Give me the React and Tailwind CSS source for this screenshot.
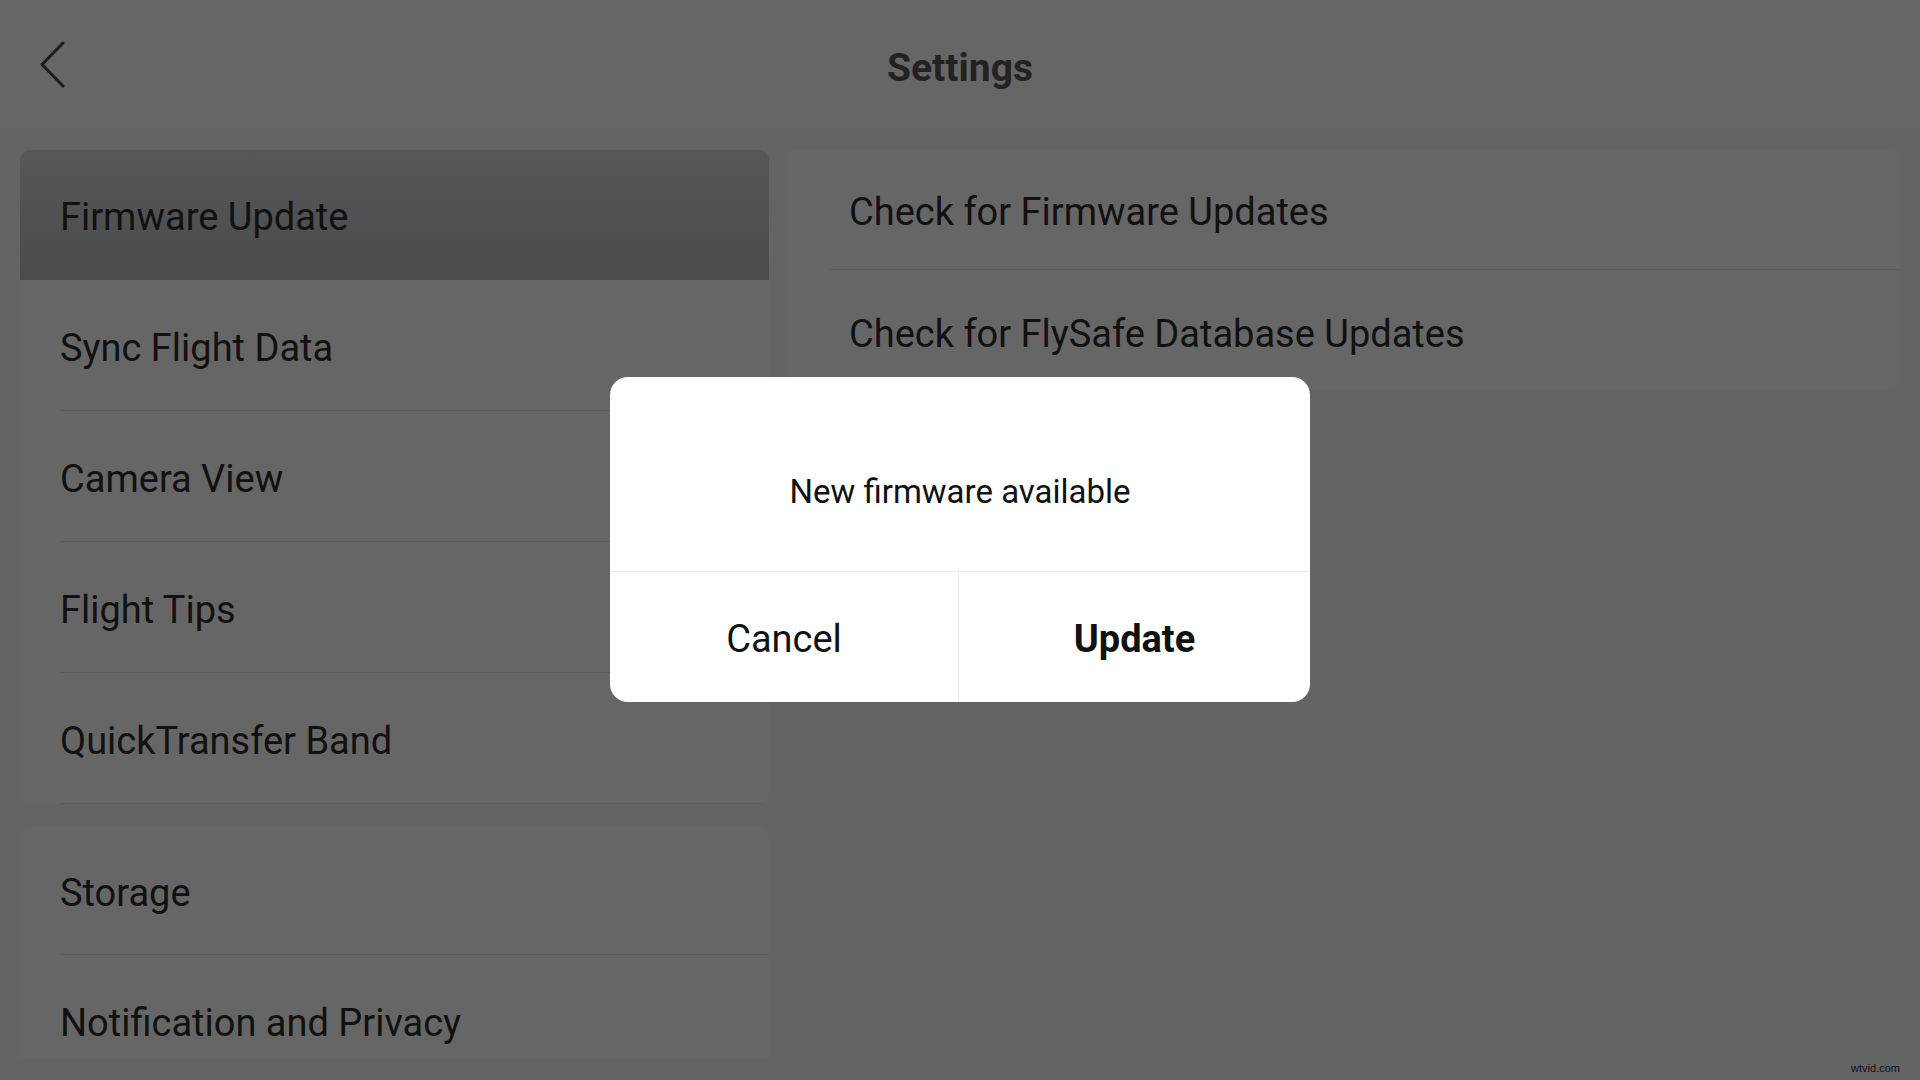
import React from "react";

const leftGroup1 = [
  "Firmware Update",
  "Sync Flight Data",
  "Camera View",
  "Flight Tips",
  "QuickTransfer Band",
];

export default function App() {
  return (
    <div
      className="relative w-[1920px] h-[1080px] overflow-hidden bg-[#636464] text-[#111]"
      style={{ fontFamily: "Roboto, 'Noto Sans', sans-serif" }}
    >
      {/* Header */}
      <div className="h-[128px] bg-[#666666] grid grid-cols-[1fr_auto_1fr] items-center">
        <div className="pl-[38px] flex items-center">
          <svg width="30" height="50" viewBox="0 0 30 50" fill="none">
            <path
              d="M25 4 L4 25.5 L25 47"
              stroke="#1c1c1c"
              strokeWidth="3"
              strokeLinecap="round"
              strokeLinejoin="round"
            />
          </svg>
        </div>
        <div className="text-[39px] font-bold text-[#222] leading-none pt-[8px]">
          Settings
        </div>
        <div />
      </div>

      {/* Body */}
      <div className="flex gap-[16px] px-[20px] pt-[22px]">
        {/* Left column */}
        <div className="w-[749px] h-[908px] overflow-hidden flex flex-col">
          <div className="shrink-0 rounded-[10px] bg-[#666666] overflow-hidden">
            {leftGroup1.map((label, i) =>
              i === 0 ? (
                <div
                  key={label}
                  className="h-[130px] pl-[40px] flex items-center bg-gradient-to-b from-[#565758] to-[#4a4b4c] text-[38px] leading-none"
                >
                  <span className="pt-[4px]">{label}</span>
                </div>
              ) : (
                <div key={label} className="h-[131px] pl-[40px]">
                  <div className="h-full flex items-center border-b border-[#5c5c5c] text-[38px] leading-none">
                    <span className="pt-[5px]">{label}</span>
                  </div>
                </div>
              )
            )}
          </div>
          <div className="mt-[22px] rounded-t-[10px] bg-[#666666] overflow-hidden shrink-0">
            <div className="h-[129px] pl-[40px]">
              <div className="h-full flex items-center border-b border-[#5e5e5e] text-[38px] leading-none">
                <span className="pt-[5px]">Storage</span>
              </div>
            </div>
            <div className="h-[131px] pl-[40px]">
              <div className="h-full flex items-center text-[38px] leading-none">
                <span className="pt-[4px]">Notification and Privacy</span>
              </div>
            </div>
          </div>
        </div>

        {/* Right column */}
        <div className="flex-1">
          <div className="rounded-[10px] bg-[#666666] overflow-hidden">
            <div className="h-[120px] pl-[44px]">
              <div className="h-full flex items-center border-b border-[#5e5e5e] pl-[20px] text-[38px] leading-none">
                <span className="pt-[5px]">Check for Firmware Updates</span>
              </div>
            </div>
            <div className="h-[120px] pl-[64px] flex items-center text-[38px] leading-none">
              <span className="pt-[7px]">Check for FlySafe Database Updates</span>
            </div>
          </div>
        </div>
      </div>

      {/* Dialog */}
      <div className="absolute left-[610px] top-[377px] w-[700px] h-[325px] bg-white rounded-[18px] overflow-hidden flex flex-col">
        <div className="h-[195px] border-b border-[#ececec] flex justify-center pt-[95px]">
          <span className="text-[33px] leading-[40px] text-[#111]">
            New firmware available
          </span>
        </div>
        <div className="flex-1 flex">
          <div className="w-[349px] border-r border-[#ececec] flex items-center justify-center text-[38px] leading-none text-[#111] pt-[4px]">
            Cancel
          </div>
          <div className="flex-1 flex items-center justify-center text-[38px] leading-none font-bold text-[#111] pt-[4px]">
            Update
          </div>
        </div>
      </div>

      {/* Watermark */}
      <div
        className="absolute right-[20px] bottom-[4px] text-[11px] text-[#111]"
        style={{ fontFamily: "'Liberation Sans', Arial, sans-serif" }}
      >
        wtvid.com
      </div>
    </div>
  );
}
